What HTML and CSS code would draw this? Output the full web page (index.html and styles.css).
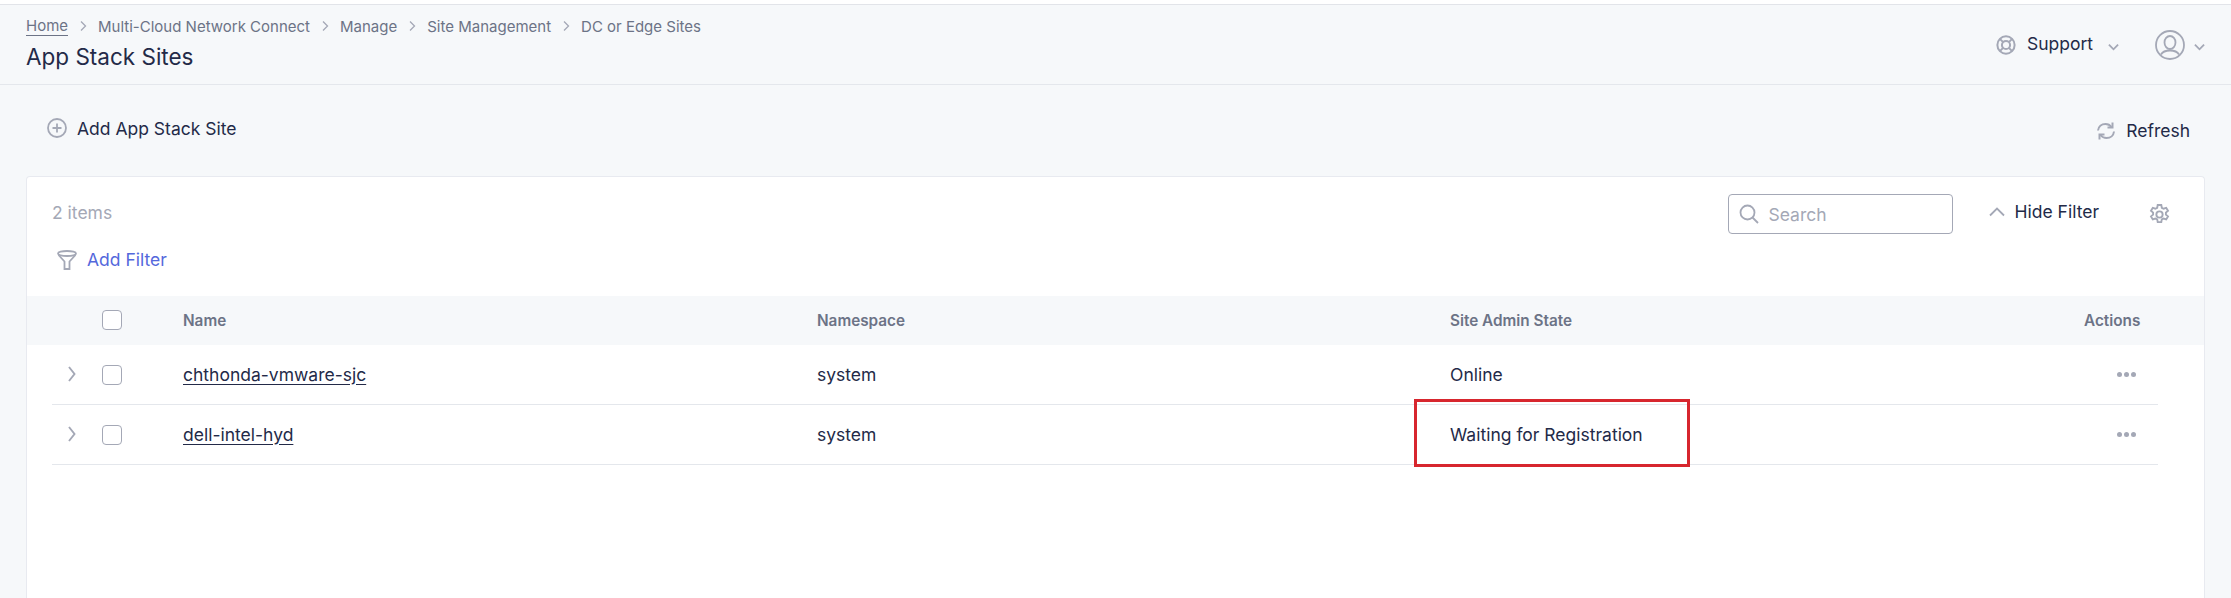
FILE: index.html
```html
<!DOCTYPE html>
<html lang="en">
<head>
    <meta charset="UTF-8">
    <title>App Stack Sites</title>
    <link rel="stylesheet" href="styles.css">
</head>
<body>
    <header class="top-bar">
        <div class="top-left">
            <nav class="crumbs">
                <a class="crumb-home">Home</a>
                <svg class="crumb-sep" viewBox="0 0 10 12"><path d="M3 1.5 7.5 6 3 10.5"/></svg>
                <span>Multi-Cloud Network Connect</span>
                <svg class="crumb-sep" viewBox="0 0 10 12"><path d="M3 1.5 7.5 6 3 10.5"/></svg>
                <span>Manage</span>
                <svg class="crumb-sep" viewBox="0 0 10 12"><path d="M3 1.5 7.5 6 3 10.5"/></svg>
                <span>Site Management</span>
                <svg class="crumb-sep" viewBox="0 0 10 12"><path d="M3 1.5 7.5 6 3 10.5"/></svg>
                <span>DC or Edge Sites</span>
            </nav>
            <h1 class="page-title">App Stack Sites</h1>
        </div>
        <div class="top-right">
            <svg class="icon-support" viewBox="0 0 22 22">
                <circle cx="11" cy="11" r="9.5"/>
                <circle cx="11" cy="11" r="4.5"/>
                <path d="M4.3 4.3 7.8 7.8M17.7 4.3 14.2 7.8M4.3 17.7 7.8 14.2M17.7 17.7 14.2 14.2"/>
            </svg>
            <span class="support-label">Support</span>
            <svg class="chev-down support-chev" viewBox="0 0 12 8"><path d="M1 1.5 6 6.5 11 1.5"/></svg>
            <svg class="icon-user" viewBox="0 0 30 30">
                <circle cx="15" cy="15" r="14"/>
                <ellipse cx="15" cy="12.5" rx="5.5" ry="6.5"/>
                <path d="M6 24.5C8 21 11 20.5 15 20.5S22 21 24 24.5"/>
            </svg>
            <svg class="chev-down" viewBox="0 0 12 8"><path d="M1 1.5 6 6.5 11 1.5"/></svg>
        </div>
    </header>

    <div class="action-bar">
        <div class="add-site">
            <svg class="icon-plus" viewBox="0 0 20 20">
                <circle cx="10" cy="10" r="9"/>
                <path d="M10 5.5v9M5.5 10h9"/>
            </svg>
            <span>Add App Stack Site</span>
        </div>
        <div class="refresh">
            <svg class="icon-refresh" viewBox="0 0 20 20">
                <path d="M2 9.5C2.4 5.5 5.5 3 9.5 3c2.5 0 4.5 1 6 3"/>
                <path d="M16.5 1.5V6.5H11.5"/>
                <path d="M18 10.5C17.6 14.5 14.5 17 10.5 17c-2.5 0-4.5-1-6-3"/>
                <path d="M3.5 18.5V13.5H8.5"/>
            </svg>
            <span>Refresh</span>
        </div>
    </div>

    <main class="card">
        <div class="card-tools">
            <span class="item-count">2 items</span>
            <div class="tools-right">
                <div class="search-box">
                    <svg class="icon-search" viewBox="0 0 20 20">
                        <circle cx="8.5" cy="8.5" r="7"/>
                        <path d="M13.5 13.5 19 19"/>
                    </svg>
                    <span>Search</span>
                </div>
                <div class="hide-filter">
                    <svg class="chev-up" viewBox="0 0 16 10"><path d="M1 8.5 8 1.5 15 8.5"/></svg>
                    <span>Hide Filter</span>
                </div>
                <svg class="icon-gear" viewBox="0 0 20 20">
                    <path d="M8.3 1h3.4l.5 2.6 1.7.9 2.5-.9 1.7 2.9-2 1.7v1.9l2 1.7-1.7 2.9-2.5-.9-1.7.9-.5 2.6H8.3l-.5-2.6-1.7-.9-2.5.9-1.7-2.9 2-1.7V8.200l-2-1.700 1.700-2.900 2.500.9 1.700-.9z"/>
                    <circle cx="10" cy="10" r="3"/>
                </svg>
            </div>
        </div>
        <div class="filter-row">
            <svg class="icon-funnel" viewBox="0 0 20 20">
                <ellipse cx="10" cy="3.5" rx="9" ry="2.5"/>
                <path d="M1.5 5 7.5 11.5V19H12.5V11.5L18.5 5"/>
            </svg>
            <span>Add Filter</span>
        </div>

        <div class="table-head">
            <span class="check-cell"><span class="checkbox"></span></span>
            <span>Name</span>
            <span>Namespace</span>
            <span>Site Admin State</span>
            <span class="actions-cell">Actions</span>
        </div>

        <div class="table-row">
            <svg class="row-chev" viewBox="0 0 8 16"><path d="M1 1 6.5 8 1 15"/></svg>
            <span class="check-cell"><span class="checkbox"></span></span>
            <a class="site-link">chthonda-vmware-sjc</a>
            <span>system</span>
            <span>Online</span>
            <span class="actions-cell"><span class="dots"><i></i><i></i><i></i></span></span>
        </div>
        <div class="table-row">
            <svg class="row-chev" viewBox="0 0 8 16"><path d="M1 1 6.5 8 1 15"/></svg>
            <span class="check-cell"><span class="checkbox"></span></span>
            <a class="site-link">dell-intel-hyd</a>
            <span>system</span>
            <span>Waiting for Registration</span>
            <span class="actions-cell"><span class="dots"><i></i><i></i><i></i></span></span>
        </div>
    </main>

    <div class="red-mark"></div>
</body>
</html>
```

FILE: styles.css
```css
/* General */
* {
    box-sizing: border-box;
}

html, body {
    height: 100%;
}

body {
    margin: 0;
    height: 598px;
    overflow: hidden;
    position: relative;
    font-family: "Inter", "Liberation Sans", sans-serif;
    font-size: 17.5px;
    color: #232a48;
    background-color: #f6f8fa;
    border-top: 4px solid #ffffff;
}

svg {
    flex: none;
    fill: none;
    stroke: #a4a8b6;
    stroke-width: 1.8;
}

/* Top bar */
.top-bar {
    height: 81px;
    padding: 0 26px;
    display: flex;
    justify-content: space-between;
    border-top: 1px solid #e2e4e9;
    border-bottom: 1px solid #e4e7ec;
}

.crumbs {
    margin-top: 11px;
    height: 20px;
    display: flex;
    align-items: center;
    font-size: 15px;
    color: #6c7386;
}

.crumb-home {
    line-height: 19px;
    border-bottom: 1px solid #6c7386;
}

.crumb-sep {
    width: 10px;
    height: 12px;
    margin: 0 10px;
    stroke-width: 1.3;
}

.page-title {
    margin: 6px 0 0;
    font-size: 22.5px;
    line-height: 30px;
    font-weight: 400;
}

.top-right {
    padding-top: 25px;
    display: flex;
    align-items: flex-start;
}

.icon-support {
    width: 20px;
    height: 20px;
    margin-top: 5px;
    stroke-width: 2.2;
}

.support-label {
    margin: 2px 0 0 11px;
    line-height: 24px;
}

.chev-down {
    width: 11px;
    height: 8px;
    margin-top: 13px;
    stroke-width: 2;
}

.support-chev {
    margin-left: 15px;
}

.icon-user {
    width: 30px;
    height: 30px;
    margin: 0 9px 0 36px;
}

/* Actions */
.action-bar {
    height: 91px;
    padding: 0 41px 0 47px;
    display: flex;
    justify-content: space-between;
    align-items: center;
}

.add-site, .refresh {
    display: flex;
    align-items: center;
}

.icon-plus {
    width: 20px;
    height: 20px;
    margin-right: 10px;
}

.add-site {
    margin-bottom: 5px;
}

.refresh span {
    margin-left: 10px;
}

.icon-refresh {
    width: 20px;
    height: 20px;
    stroke-width: 2;
}

/* Card */
.card {
    width: 2179px;
    margin-left: 26px;
    height: 422px;
    background-color: #ffffff;
    border: 1px solid #e8eaf0;
    border-bottom: none;
    border-radius: 4px 4px 0 0;
}

.card-tools {
    height: 70px;
    padding: 17px 34px 0 25px;
    display: flex;
    justify-content: space-between;
}

.item-count {
    margin-top: 9px;
    line-height: 20px;
    color: #a4a8b6;
}

.tools-right {
    display: flex;
    align-items: flex-start;
}

.search-box {
    width: 225px;
    height: 40px;
    padding-left: 10px;
    display: flex;
    align-items: center;
    gap: 10px;
    color: #a4a8b6;
    border: 1px solid #a4a8b6;
    border-radius: 4px;
}

.icon-search {
    width: 20px;
    height: 20px;
}

.hide-filter {
    margin: 8px 50px 0 36px;
    display: flex;
    align-items: center;
    gap: 10px;
    line-height: 20px;
}

.chev-up {
    width: 16px;
    height: 10px;
}

.icon-gear {
    width: 21px;
    height: 21px;
    margin-top: 10px;
}

.filter-row {
    height: 49px;
    padding: 3px 0 0 30px;
    display: flex;
    align-items: flex-start;
    gap: 10px;
    line-height: 20px;
    color: #5468dc;
}

.icon-funnel {
    width: 20px;
    height: 20px;
}

/* Table */
.table-head, .table-row {
    display: grid;
    grid-template-columns: 131px 634px 633px 634px 1fr;
    align-items: center;
}

.table-head {
    height: 49px;
    padding: 0 46px 0 25px;
    font-size: 15.3px;
    font-weight: 600;
    color: #6c7386;
    background-color: #f6f8fa;
}

.table-head .checkbox {
    margin-top: -2px;
}

.table-row {
    position: relative;
    height: 60px;
    margin: 0 46px 0 25px;
    border-bottom: 1px solid #e4e7ec;
}

.check-cell {
    padding-left: 50px;
    display: flex;
}

.checkbox {
    width: 20px;
    height: 20px;
    border: 1px solid #a4a8b6;
    border-radius: 4px;
    background-color: #ffffff;
}

.row-chev {
    position: absolute;
    left: 16px;
    top: 21px;
    width: 8px;
    height: 16px;
    stroke-width: 1.9;
}

.site-link {
    text-decoration: underline;
    text-underline-offset: 3px;
}

.actions-cell {
    display: flex;
    justify-content: flex-end;
}

.table-head .actions-cell {
    padding-right: 22px;
}

.table-row .actions-cell {
    padding-right: 22px;
}

.dots {
    display: flex;
    gap: 2px;
}

.dots i {
    width: 5px;
    height: 5px;
    border-radius: 50%;
    background-color: #a4a8b6;
}

/* Annotation over the table */
.red-mark {
    position: absolute;
    left: 1414px;
    top: 395px;
    width: 276px;
    height: 68px;
    border: 3px solid #d7262e;
}
```
